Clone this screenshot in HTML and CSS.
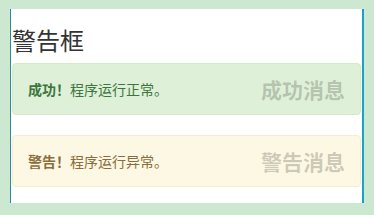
FILE: index.html
```html
<!DOCTYPE html>
<html lang="zh-CN">
<head>
    <meta charset="UTF-8">
    <title>警告框</title>
    <link rel="stylesheet" href="styles.css">
</head>
<body>
<div class="panel">
    <h3 class="title">警告框</h3>
    <div class="alert alert-success">
        <span class="tag">成功消息</span>
        <strong>成功！</strong>程序运行正常。
    </div>
    <div class="alert alert-warning">
        <span class="tag">警告消息</span>
        <strong>警告！</strong>程序运行异常。
    </div>
</div>
</body>
</html>
```

FILE: styles.css
```css
*{
    margin: 0;
    padding: 0;
    box-sizing: border-box;
}

body{
    background-color: #cde8d0;
    padding: 9px 10px 12px 10px;
    font-family: "Noto Sans CJK SC", "Liberation Sans", sans-serif;
    font-size: 14px;
    color: #333333;
}

.panel{
    background-color: #ffffff;
    border-left: 1px solid #2a8ca3;
    border-right: 2px solid #18a2c8;
    padding: 0 1px 16px 1px;
}

.title{
    font-size: 24px;
    font-weight: normal;
    line-height: 27px;
    padding-top: 17px;
    margin-bottom: 10px;
    color: #333333;
}

.alert{
    padding: 15px;
    border: 1px solid transparent;
    border-radius: 4px;
    line-height: 20px;
    margin-bottom: 20px;
}
.alert:last-child{
    margin-bottom: 0;
}

.alert strong{
    font-weight: bold;
}

.alert-success{
    background-color: #dff0d8;
    border-color: #d6e9c6;
    color: #3c763d;
}

.alert-warning{
    background-color: #fcf8e3;
    border-color: #faebcc;
    color: #8a6d3b;
}

.tag{
    float: right;
    font-size: 21px;
    font-weight: bold;
    line-height: 20px;
    color: rgba(0, 0, 0, 0.2);
}
```
